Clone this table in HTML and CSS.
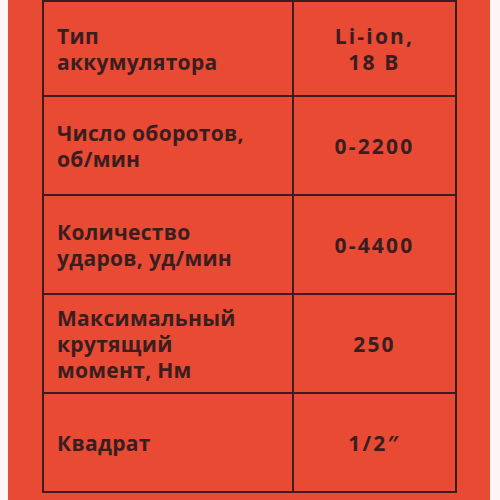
FILE: index.html
```html
<!DOCTYPE html>
<html lang="ru">
<head>
<meta charset="utf-8">
<link rel="stylesheet" href="styles.css">
</head>
<body>
<div class="box">
  <div class="spec">
    <div class="cell name"><span>Тип</span><span>аккумулятора</span></div>
    <div class="cell val"><span>Li-ion,</span><span>18 В</span></div>
    <div class="cell name"><span>Число оборотов,</span><span>об/мин</span></div>
    <div class="cell val"><span>0-2200</span></div>
    <div class="cell name"><span>Количество</span><span>ударов, уд/мин</span></div>
    <div class="cell val"><span>0-4400</span></div>
    <div class="cell name"><span>Максимальный</span><span>крутящий</span><span>момент, Нм</span></div>
    <div class="cell val"><span>250</span></div>
    <div class="cell name"><span>Квадрат</span></div>
    <div class="cell val"><span>1/2&Prime;</span></div>
  </div>
</div>
</body>
</html>
```

FILE: styles.css
```css
html, body {
  margin: 0;
  padding: 0;
  background: #fbf6f5;
  height: 500px;
  overflow: hidden;
}
.box {
  margin-left: 8px;
  width: 482px;
  height: 500px;
  background: #e84a34;
  padding-left: 34px;
  box-sizing: border-box;
}
.spec {
  display: grid;
  grid-template-columns: 248px 161px;
  grid-template-rows: 93px 97px 97px 97px 97px;
  gap: 2px;
  padding: 2px;
  width: max-content;
  background: #3c1c1d;
}
.cell {
  background: #e84a34;
  color: #3a1e1f;
  font-family: "Open Sans", "DejaVu Sans", sans-serif;
  font-weight: 700;
  font-size: 21px;
  line-height: 26px;
  letter-spacing: 0.3px;
  display: flex;
  flex-direction: column;
  justify-content: center;
}
.cell span {
  display: block;
  height: 26px;
  overflow: visible;
}
.name {
  padding-left: 13px;
}
.val {
  align-items: center;
  text-align: center;
  letter-spacing: 2.2px;
}
```
